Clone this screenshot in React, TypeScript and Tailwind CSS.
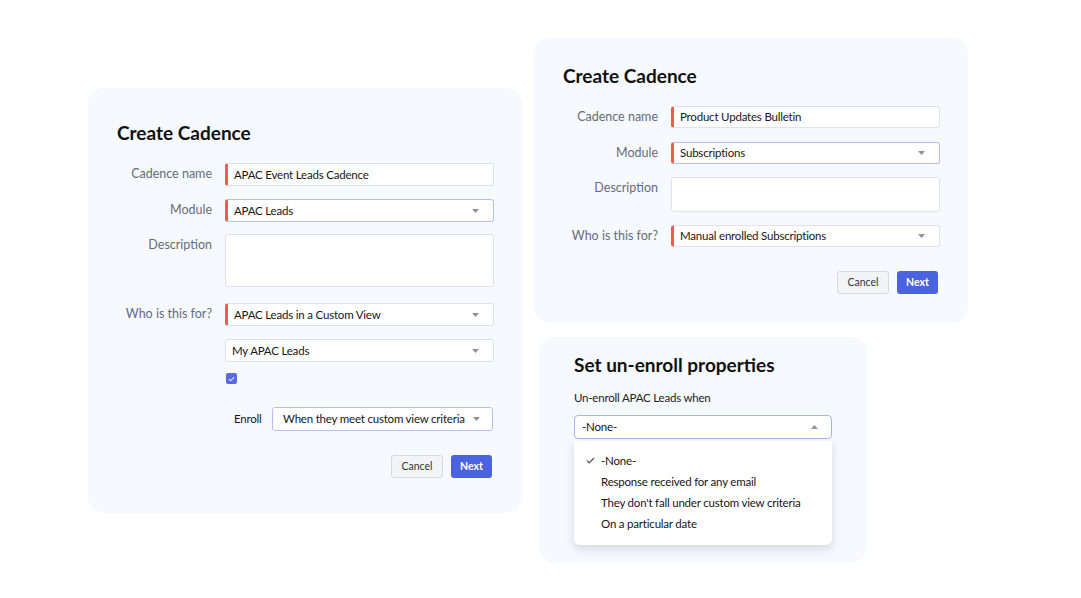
import React from 'react'

const font = { fontFamily: 'Lato, "Open Sans", sans-serif' }

function Caret({ up = false }: { up?: boolean }) {
  return (
    <svg width="7" height="4" viewBox="0 0 7 4" className="shrink-0">
      {up ? <polygon points="0,4 7,4 3.5,0" fill="#8e939c" /> : <polygon points="0,0 7,0 3.5,4" fill="#8e939c" />}
    </svg>
  )
}

function Field({ value, mandatory = true, select = false, focus = false, h = 'h-[23px]' }: { value?: string, mandatory?: boolean, select?: boolean, focus?: boolean, h?: string }) {
  return (
    <div className={`flex items-center w-[269px] ${h} bg-white rounded-[3px] border ${focus ? 'border-[#b7bdf4]' : 'border-[#dfe2ea]'} ${mandatory ? 'border-l-[3px] border-l-[#ef5b4f]' : 'pl-[2px]'} pl-[6px] pr-[14px]`}>
      <span className="flex-1 text-[11.5px] tracking-[-0.2px] text-[#161616] whitespace-nowrap">{value}</span>
      {select && <Caret />}
    </div>
  )
}

function Row({ label, children, mt }: { label: string, children: React.ReactNode, mt: string }) {
  return (
    <div className={`flex ${mt}`}>
      <div className="w-[95px] text-right text-[12.5px] leading-[18px] pt-[2px] text-[#646c7c] whitespace-nowrap">{label}</div>
      <div className="ml-[13px]">{children}</div>
    </div>
  )
}

function Buttons({ mt }: { mt: string }) {
  return (
    <div className={`flex justify-end gap-[8px] pr-[2px] ${mt}`}>
      <button className="w-[52px] h-[23px] rounded-[3px] border border-[#d6d9df] bg-[#f3f4f6] text-[10.5px] text-[#333]">Cancel</button>
      <button className="w-[41px] h-[23px] rounded-[3px] bg-[#4b62e1] text-[10.5px] font-bold text-white">Next</button>
    </div>
  )
}

export default function App() {
  return (
    <div style={font} className="w-[1081px] h-[598px] bg-white overflow-hidden flex items-start pl-[88px]">
      {/* left card */}
      <div className="mt-[88px] w-[434px] h-[425px] rounded-[16px] bg-[#f6f9fe] pl-[29px] pt-[33px]">
        <h2 className="text-[19px] leading-[24px] font-bold text-[#111]">Create Cadence</h2>
        <Row label="Cadence name" mt="mt-[18px]"><Field value="APAC Event Leads Cadence" /></Row>
        <Row label="Module" mt="mt-[13px]"><Field value="APAC Leads" select focus /></Row>
        <Row label="Description" mt="mt-[12px]"><Field mandatory={false} h="h-[53px]" /></Row>
        <Row label="Who is this for?" mt="mt-[16px]"><Field value="APAC Leads in a Custom View" select /></Row>
        <Row label="" mt="mt-[13px]"><Field value="My APAC Leads" select mandatory={false} /></Row>
        <div className="ml-[109px] mt-[11px] w-[11px] h-[11px] rounded-[2px] bg-[#5a68e4] flex items-center justify-center">
          <svg width="7" height="6" viewBox="0 0 7 6"><path d="M1 3l1.8 1.8L6 1.2" stroke="#dfe3ff" strokeWidth="1.1" fill="none" /></svg>
        </div>
        <div className="ml-[117px] mt-[23px] flex items-center">
          <span className="text-[11.5px] tracking-[-0.2px] text-[#161616] w-[38px]">Enroll</span>
          <div className="flex items-center w-[221px] h-[24px] bg-white rounded-[3px] border border-[#b7bdf4] pl-[10px] pr-[12px]">
            <span className="flex-1 text-[11.5px] tracking-[-0.2px] text-[#161616] whitespace-nowrap overflow-hidden">When they meet custom view criteria</span>
            <span className="ml-[6px]"><Caret /></span>
          </div>
        </div>
        <div className="w-[377px]"><Buttons mt="mt-[24px]" /></div>
      </div>

      <div className="ml-[12px] mt-[38px] flex flex-col">
        {/* right top card */}
        <div className="w-[434px] h-[285px] rounded-[16px] bg-[#f6f9fe] pl-[29px] pt-[26px]">
          <h2 className="text-[19px] leading-[24px] font-bold text-[#111]">Create Cadence</h2>
          <Row label="Cadence name" mt="mt-[18px]"><Field value="Product Updates Bulletin" h="h-[22px]" /></Row>
          <Row label="Module" mt="mt-[14px]"><Field value="Subscriptions" select focus h="h-[22px]" /></Row>
          <Row label="Description" mt="mt-[13px]"><Field mandatory={false} h="h-[35px]" /></Row>
          <Row label="Who is this for?" mt="mt-[13px]"><Field value="Manual enrolled Subscriptions" select h="h-[22px]" /></Row>
          <div className="w-[377px]"><Buttons mt="mt-[24px]" /></div>
        </div>

        {/* un-enroll card */}
        <div className="ml-[5px] mt-[14px] w-[328px] h-[226px] rounded-[16px] bg-[#f6f9fe] pl-[35px] pt-[16px]">
          <h2 className="text-[19px] leading-[24px] font-bold text-[#111]">Set un-enroll properties</h2>
          <div className="mt-[13px] text-[11.5px] tracking-[-0.2px] leading-[16px] text-[#222]">Un-enroll APAC Leads when</div>
          <div className="mt-[9px] w-[258px] h-[24px] flex items-center bg-white rounded-[4px] border border-[#a9b2f1] pl-[7px] pr-[13px]">
            <span className="flex-1 text-[11.5px] tracking-[-0.2px] text-[#161616]">-None-</span>
            <Caret up />
          </div>
          <div className="mt-[2px] w-[258px] h-[104px] bg-white rounded-b-[6px] shadow-[0_4px_10px_rgba(60,70,100,0.18)] pt-[9px]">
            {['-None-', 'Response received for any email', "They don't fall under custom view criteria", 'On a particular date'].map((t, i) => (
              <div key={t} className="flex items-center h-[21px] text-[11.5px] tracking-[-0.2px] text-[#161616]">
                <span className="w-[27px] flex justify-end pr-[6px]">
                  {i === 0 && <svg width="9" height="7" viewBox="0 0 9 7"><path d="M1 3.5l2.3 2.3L8 1" stroke="#555b66" strokeWidth="1.3" fill="none" /></svg>}
                </span>
                {t}
              </div>
            ))}
          </div>
        </div>
      </div>
    </div>
  )
}
